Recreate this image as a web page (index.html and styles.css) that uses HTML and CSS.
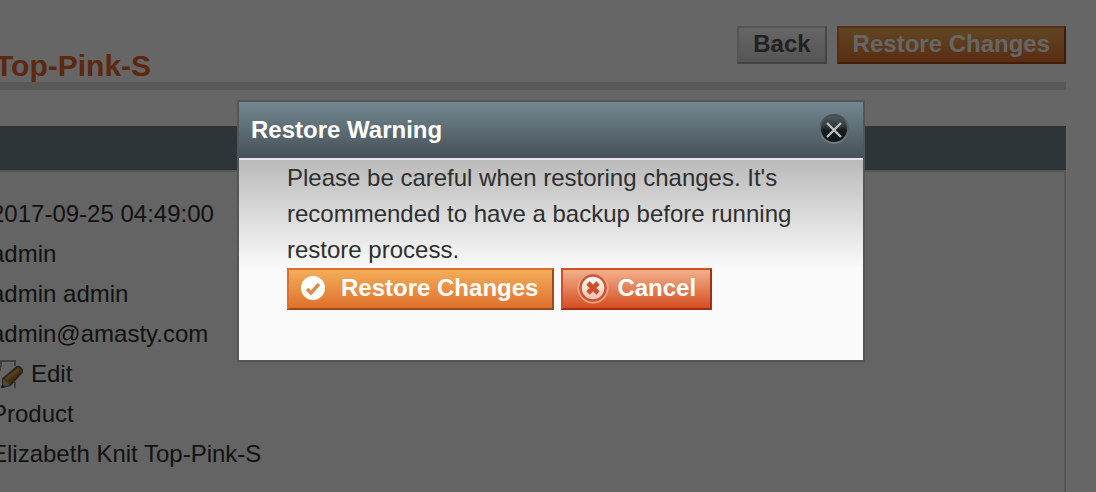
FILE: index.html
```
<!DOCTYPE html>
<html lang="en">
<head>
<meta charset="utf-8">
<title>Restore Warning</title>
<link rel="stylesheet" href="styles.css">
</head>
<body>
<main class="page">
  <header class="page-header">
    <h1 class="page-title">Top-Pink-S</h1>
    <div class="actions">
      <button class="btn btn-back" type="button">Back</button>
      <button class="btn btn-primary" type="button">Restore Changes</button>
    </div>
  </header>
  <section class="panel">
    <div class="panel-head"></div>
    <ul class="details">
      <li>2017-09-25 04:49:00</li>
      <li>admin</li>
      <li>admin admin</li>
      <li>admin@amasty.com</li>
      <li class="edit-row">
        <svg class="edit-icon" viewBox="0 0 32 32" aria-hidden="true">
          <path d="M5 30V11l6-8h13v26" fill="#fcfcfc"/>
          <path d="M9 9v3H6M10 9V3h14v5M24 24v6" fill="none" stroke="#a0a0a0" stroke-width="2"/>
          <path d="M12 21 26 9q3-1 6 4L19 27l-7 2z" fill="#b57c30" stroke="#705a40" stroke-width="2"/>
          <path d="m15 21 13-10" stroke="#d99c48" stroke-width="3"/>
          <path d="m12 21 7 6-7 2z" fill="#b9b38e"/>
          <path d="m11 26 3 3-4 1z" fill="#333"/>
        </svg>
        <span>Edit</span>
      </li>
      <li>Product</li>
      <li>Elizabeth Knit Top-Pink-S</li>
    </ul>
  </section>
</main>
<div class="overlay"></div>
<div class="dialog" role="dialog" aria-labelledby="dialog-title">
  <div class="dialog-head">
    <h2 class="dialog-title" id="dialog-title">Restore Warning</h2>
    <button class="dialog-close" type="button" aria-label="Close">
      <svg viewBox="0 0 32 32" aria-hidden="true">
        <defs>
          <linearGradient id="close-fill" x1="0" y1="0" x2="0" y2="1">
            <stop offset="0" stop-color="#50585b"/>
            <stop offset=".4" stop-color="#343b3e"/>
            <stop offset=".55" stop-color="#141c1f"/>
            <stop offset="1" stop-color="#0c1518"/>
          </linearGradient>
          <linearGradient id="close-ring" x1="0" y1="0" x2="0" y2="1">
            <stop offset="0" stop-color="#444c4f"/>
            <stop offset="1" stop-color="#757b7e"/>
          </linearGradient>
        </defs>
        <circle cx="16" cy="15" r="14" fill="url(#close-fill)" stroke="url(#close-ring)" stroke-width="2"/>
        <path d="m9 9 14 14M23 9 9 23" stroke="#b9bebf" stroke-width="2.4"/>
      </svg>
    </button>
  </div>
  <div class="dialog-body">
    <p class="dialog-text">Please be careful when restoring changes. It's recommended to have a backup before running restore process.</p>
    <div class="dialog-actions">
      <button class="btn btn-large btn-primary" type="button">
        <svg class="check-icon" viewBox="0 0 24 24" aria-hidden="true">
          <circle cx="12" cy="12" r="12" fill="#fff"/>
          <path d="m6 13 4 4 8-9" fill="none" stroke="#e58a48" stroke-width="3.4"/>
        </svg>
        <span>Restore Changes</span>
      </button>
      <button class="btn btn-large btn-cancel" type="button">
        <svg class="cross-icon" viewBox="0 0 32 32" aria-hidden="true">
          <defs>
            <linearGradient id="cross-fill" x1="0" y1="0" x2="0" y2="1">
              <stop offset="0" stop-color="#fff"/>
              <stop offset="1" stop-color="#f1bfae"/>
            </linearGradient>
          </defs>
          <circle cx="16" cy="16" r="14.5" fill="none" stroke="#eaa488" stroke-width="2"/>
          <circle cx="16" cy="16" r="12.5" fill="url(#cross-fill)" stroke="#cf5430" stroke-width="2.4"/>
          <path d="m11 11 10 10M21 11 11 21" stroke="#cf4e28" stroke-width="4.6"/>
        </svg>
        <span>Cancel</span>
      </button>
    </div>
  </div>
</div>
</body>
</html>
```
FILE: styles.css
```
* {
  box-sizing: border-box;
}

body {
  margin: 0;
  background: #fff;
  color: #2f2f2f;
  font: 24px/40px "Liberation Sans", Arial, sans-serif;
}

h1, h2, p, ul {
  margin: 0;
  padding: 0;
}

.page {
  display: flex;
  flex-direction: column;
  height: 100vh;
  padding: 26px 30px 0 0;
  overflow: hidden;
}

.page-header {
  display: flex;
  justify-content: space-between;
  height: 64px;
  border-bottom: 8px solid #dfdfdf;
}

.page-title {
  margin: 20px 0 0 -5px;
  color: #e66526;
  font-size: 30px;
  line-height: 40px;
}

.actions {
  display: flex;
  align-items: flex-start;
  gap: 10px;
}

.btn {
  display: flex;
  align-items: center;
  height: 38px;
  padding: 0 14px 2px;
  border: 2px solid;
  border-radius: 0;
  color: #fff;
  font: bold 24px/32px "Liberation Sans", Arial, sans-serif;
  white-space: nowrap;
}

.btn-back {
  border-color: #d4d4d4 #aaa #aaa #d4d4d4;
  background: linear-gradient(#fff, #d4d4d4);
  color: #555;
}

.btn-primary {
  border-color: #de702f #9d4a1c #9d4a1c #de702f;
  background: linear-gradient(#f3ae59, #e0702c);
}

.btn-cancel {
  border-color: #cf4e27 #9d3215 #9d3215 #cf4e27;
  background: linear-gradient(#f2b18b, #d54d22);
}

.btn-large {
  height: 42px;
  padding: 0 14px 2px 12px;
}

.panel {
  display: flex;
  flex: 1;
  flex-direction: column;
  margin-top: 36px;
}

.panel-head {
  height: 44px;
  background: #70858e;
}

.details {
  flex: 1;
  margin-left: -9px;
  padding-top: 22px;
  border: 2px solid #d8d8d8;
  border-width: 2px 2px 0 0;
  background: #fafafa;
  list-style: none;
}

.edit-row {
  display: flex;
  align-items: center;
  gap: 8px;
}

.edit-icon {
  width: 32px;
  height: 32px;
}

.overlay {
  position: fixed;
  inset: 0;
  background: rgba(0, 0, 0, .6);
}

.dialog {
  position: absolute;
  top: 100px;
  left: 237px;
  width: 628px;
  border: 2px solid #555;
  background: #fafafa;
}

.dialog-head {
  display: flex;
  align-items: center;
  justify-content: space-between;
  height: 58px;
  padding: 0 13px 0 12px;
  border-bottom: 2px solid #ebe5eb;
  background: linear-gradient(#728890, #465057);
}

.dialog-title {
  color: #fff;
  font-size: 24px;
  line-height: 32px;
}

.dialog-close {
  display: flex;
  padding: 0;
  border: 0;
  background: none;
}

.dialog-close svg {
  width: 32px;
  height: 32px;
}

.dialog-body {
  padding: 0 48px 50px;
  background: linear-gradient(#bababa, #fafafa 108px);
}

.dialog-text {
  line-height: 36px;
}

.dialog-actions {
  display: flex;
  gap: 7px;
}

.check-icon {
  width: 24px;
  height: 24px;
  margin-right: 16px;
}

.cross-icon {
  width: 32px;
  height: 32px;
  margin: 0 8px 0 2px;
}
```
